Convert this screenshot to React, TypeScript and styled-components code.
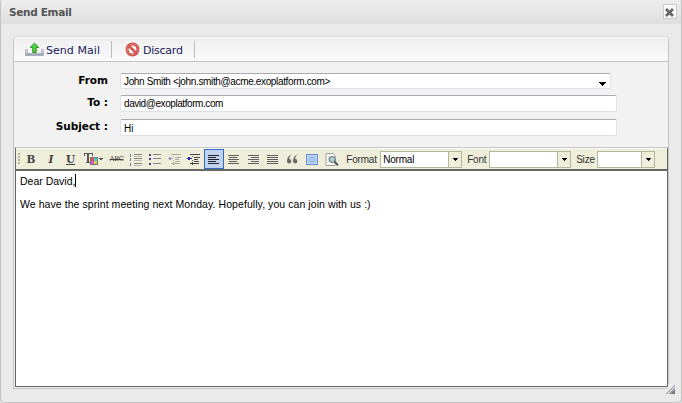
import React from 'react';
import styled, { createGlobalStyle } from 'styled-components';

const Global = createGlobalStyle`
  * { box-sizing: border-box; }
  body { margin: 0; background: #dcdcdc; font-family: "Liberation Sans", Arial, sans-serif; overflow: hidden; }
  svg { display: block; flex: none; }
`;

const Dialog = styled.div`
  width: 682px;
  height: 403px;
  display: flex;
  flex-direction: column;
  border: solid #c4c4c4;
  border-width: 0 1px 1px;
  border-radius: 3px 3px 5px 5px;
  background: #eaeaea;
`;
const TitleBar = styled.header`
  height: 24px;
  flex: none;
  display: flex;
  align-items: center;
  justify-content: space-between;
  padding: 0 4px 0 8px;
  background: linear-gradient(#eeeeee, #dfdfdf);
  border-radius: 3px 3px 0 0;
`;
const Label = styled.span<{ $size: number; $space?: number; $color?: string; $bold?: boolean; $verdana?: boolean }>`
  font-family: ${p => (p.$verdana ? '"DejaVu Sans", Verdana' : '"Liberation Sans", Arial')}, sans-serif;
  font-size: ${p => p.$size}px;
  letter-spacing: ${p => p.$space ?? 0}px;
  color: ${p => p.$color ?? '#000'};
  font-weight: ${p => (p.$bold ? 700 : 400)};
  white-space: pre;
  line-height: 14px;
`;
const CloseButton = styled.button`
  width: 14px;
  height: 15px;
  margin-bottom: 1px;
  padding: 1px 0 0;
  border: 1px solid #c9c9c9;
  background: #fafafa;
`;
const Panel = styled.main`
  height: 353px;
  margin: 12px 12px 0 12px;
  display: flex;
  flex-direction: column;
  border: 1px solid #c5c5c5;
  border-top-color: #d9d9d9;
  border-radius: 5px 5px 0 0;
  background: #f2f2f2;
`;
const Actions = styled.div`
  height: 25px;
  flex: none;
  display: flex;
  align-items: center;
  border-bottom: 1px solid #c5c5c5;
  border-top: 1px solid #fff;
  border-radius: 4px 4px 0 0;
  background: linear-gradient(#efefef, #fbfbfb);
`;
const Action = styled.button<{ $width: number; $gap: number; $left: number }>`
  width: ${p => p.$width}px;
  height: 17px;
  display: flex;
  align-items: center;
  gap: ${p => p.$gap}px;
  padding: 0 0 0 ${p => p.$left}px;
  border: 0;
  border-right: 1px solid #bcbcbc;
  background: none;
  & > span { padding-top: 2px; }
`;
const Form = styled.form`
  height: 86px;
  flex: none;
  display: grid;
  grid-template-columns: 95px 497px;
  grid-template-rows: 22px 24px 18px;
  column-gap: 11px;
  padding-top: 11px;
  border-bottom: 1px solid #c5c5c5;
`;
const FieldName = styled.label<{ $right?: number }>`
  line-height: 14px;
  display: flex;
  justify-content: flex-end;
  padding-right: ${p => p.$right ?? 0}px;
`;
const Field = styled.div<{ $width?: number; $height?: number; $top?: number }>`
  width: ${p => p.$width ?? 497}px;
  height: ${p => p.$height ?? 17}px;
  display: flex;
  align-items: center;
  justify-content: space-between;
  padding: ${p => p.$top ?? 2}px 4px 0 3px;
  background: #fff;
  border: 1px solid #dfe2e9;
  border-top-color: #ababab;
  border-radius: 2px;
  & > svg { margin-top: 3px; }
`;
const Editor = styled.section`
  flex: 1;
  display: flex;
  flex-direction: column;
  margin: 0 0 1px 1px;
  padding-top: 1px;
  border: 1px solid #666;
  border-top: 0;
  background: #fff;
`;
const EditorBar = styled.div`
  height: 22px;
  flex: none;
  display: flex;
  align-items: center;
  background: #eeeedb;
  border-bottom: 2px solid #696764;
`;
const Handle = styled.i`
  width: 2px;
  height: 12px;
  margin: 0 1px 0 2px;
  background: repeating-linear-gradient(#b5b39b 0 2px, transparent 2px 3px);
`;
const Tool = styled.button<{ $width?: number; $active?: boolean }>`
  width: ${p => p.$width ?? 19.6}px;
  height: ${p => (p.$active ? 20 : 18)}px;
  flex: none;
  display: flex;
  align-items: center;
  justify-content: center;
  padding: 0;
  border: ${p => (p.$active ? '1px solid #316ac5' : '0')};
  background: ${p => (p.$active ? '#c1d2ee' : 'transparent')};
`;
const Letter = styled.span<{ $kind: 'b' | 'i' | 'u' }>`
  font: 700 10.5px/13px "DejaVu Serif", "Liberation Serif", serif;
  color: #444;
  font-style: ${p => (p.$kind === 'i' ? 'italic' : 'normal')};
  text-decoration: ${p => (p.$kind === 'u' ? 'underline' : 'none')};
`;
const Struck = styled.span`
  font: 7px/9px "DejaVu Serif", serif;
  letter-spacing: -0.6px;
  color: #444;
  text-decoration: line-through;
`;
const Caption = styled.span<{ $width: number }>`
  width: ${p => p.$width}px;
  flex: none;
  display: flex;
  padding: 1px 0 0 5px;
`;
const Select = styled.div<{ $width: number }>`
  width: ${p => p.$width}px;
  height: 17px;
  flex: none;
  display: flex;
  justify-content: space-between;
  padding-left: 2px;
  border: 1px solid #b5b79c;
  background: #fff;
  & > span:first-child { padding-top: 1px; }
`;
const Arrow = styled.span`
  width: 13px;
  height: 15px;
  display: grid;
  place-items: center;
  border-left: 1px solid #b5b79c;
  background: #eeeedb;
`;
const Message = styled.div`
  flex: 1;
  padding: 3px 4px;
`;
const Line = styled.p`
  height: 14px;
  margin: 0 0 9px;
  display: flex;
`;
const Caret = styled.i`
  width: 1px;
  height: 13px;
  background: #000;
`;
const Grip = styled.svg`
  position: absolute;
  left: 665px;
  top: 384px;
`;

const Lines = ({ rows, color = '#606060' }: { rows: number[][]; color?: string }) => (
  <svg width="13" height="13" shapeRendering="crispEdges">
    {rows.map(([x, y, w], i) => <rect key={i} x={x} y={y} width={w} height="1" fill={color} />)}
  </svg>
);
const alignRows = (kind: 'left' | 'center' | 'right' | 'full') =>
  [11, 8, 11, 8, 11].map((w, i) => {
    const width = kind === 'full' ? 11 : w;
    const x = kind === 'right' ? 12 - width : kind === 'center' ? 1 + Math.floor((11 - width) / 2) : 1;
    return [x, 2 + i * 2, width];
  });
const ListIcon = ({ numbered }: { numbered?: boolean }) => (
  <svg width="13" height="13" shapeRendering="crispEdges">
    {[1, 5, 10].map(y => (
      <g key={y}>
        {numbered
          ? <path d={`M1 ${y}h1v3h-1z`} fill="#7470b9" />
          : <rect x="1" y={y} width="2" height="2" fill="#4541a0" />}
        <rect x="5" y={y} width="8" height="1" fill="#858585" />
        {numbered && <rect x="5" y={y + 2} width="8" height="1" fill="#bbb" />}
      </g>
    ))}
  </svg>
);
const IndentIcon = ({ faded }: { faded?: boolean }) => (
  <svg width="13" height="13" shapeRendering="crispEdges" opacity={faded ? 0.4 : 1}>
    <path d="M3 1h10v1H3zM7 4h6v1H7zM7 6h4v1H7zM7 8h5v1H7zM3 10h9v1H3z" fill="#444" />
    <path d="M0 5h5v1H0zM1 4h2v3H1z" fill="#332caa" />
    <path d="M5 1v1M5 3v1M5 7v1M5 9v1M5 11v1" stroke="#555" />
  </svg>
);
const Down = () => <svg width="5" height="3" shapeRendering="crispEdges"><path d="M0 0h5v1H0zM1 1h3v1H1zM2 2h1v1H2z" /></svg>;

export default function App() {
  return (
    <>
      <Global />
      <Dialog>
        <TitleBar>
          <Label $size={10.5} $bold $verdana $color="#555" $space={-0.32}>Send Email</Label>
          <CloseButton aria-label="Close">
            <svg width="11" height="11"><path d="M3 3l5 5m0-5l-5 5" stroke="#666" strokeWidth="2.8" strokeLinecap="square" /></svg>
          </CloseButton>
        </TitleBar>
        <Panel>
          <Actions>
            <Action $width={98} $gap={2} $left={11}>
              <svg width="19" height="15">
                <defs><linearGradient id="tray" x2="0" y2="1"><stop stopColor="#eef1f5" /><stop offset="1" stopColor="#8b95a5" /></linearGradient></defs>
                <path d="M.5 7.5h2v4h14v-4h2v6H.5z" fill="url(#tray)" stroke="#a0a8b7" strokeWidth=".7" />
                <path d="M9.5 1.2L5.2 5.4h2.6v5.1h3.4V5.4h2.6z" fill="#51d73d" stroke="#278e25" />
              </svg>
              <Label $size={11} $verdana $color="#20205c" $space={0.05}>Send Mail</Label>
            </Action>
            <Action $width={83} $gap={3} $left={13}>
              <svg width="15" height="15"><circle cx="7.5" cy="7.5" r="5.4" fill="#fff" stroke="#c84744" strokeWidth="3" /><circle cx="7.5" cy="7.5" r="5.5" fill="none" stroke="#ee8c82" strokeWidth="1" /><path d="M3.5 3.5l8 8" stroke="#d95752" strokeWidth="2.6" /></svg>
              <Label $size={11} $verdana $color="#20205c" $space={-0.25}>Discard</Label>
            </Action>
          </Actions>
          <Form>
            <FieldName $right={1}><Label $size={10.5} $bold $verdana>From</Label></FieldName>
            <Field $width={491} $height={16}>
              <Label $size={10} $space={-0.35}>John Smith &lt;john.smith@acme.exoplatform.com&gt;</Label>
              <svg width="7" height="4" shapeRendering="crispEdges"><path d="M0 0h7v1H0zM1 1h5v1H1zM2 2h3v1H2zM3 3h1v1H3z" /></svg>
            </Field>
            <FieldName $right={1}><Label $size={10.5} $bold $verdana>To :</Label></FieldName>
            <Field $top={0}><Label $size={10} $space={-0.43}>david@exoplatform.com</Label></Field>
            <FieldName $right={1}><Label $size={10.5} $bold $verdana>Subject :</Label></FieldName>
            <Field><Label $size={10}>Hi</Label></Field>
          </Form>
          <Editor>
            <EditorBar>
              <Handle />
              <Tool $width={20}><Letter $kind="b">B</Letter></Tool>
              <Tool $width={20}><Letter $kind="i">I</Letter></Tool>
              <Tool $width={19}><Letter $kind="u">U</Letter></Tool>
              <Tool $width={27}>
                <svg width="19" height="14" shapeRendering="crispEdges">
                  <path d="M0 1h9v3H8V2H5v8h2v1H2v-1h1V2H1v2H0z" fill="#555" />
                  <path d="M6 5h8v8H6z" fill="#777" />
                  <path d="M7 6h3v3H7z" fill="#f04b4b" />
                  <path d="M10 6h3v3h-3z" fill="#3cd5d2" />
                  <path d="M7 9h3v3H7z" fill="#e052e0" />
                  <path d="M10 9h3v3h-3z" fill="#d5ce3a" />
                  <path d="M15 6h4v1h-1v1h-2V7h-1z" fill="#555" />
                </svg>
              </Tool>
              <Tool $width={19}><Struck>ABC</Struck></Tool>
              <Tool $width={19}><ListIcon numbered /></Tool>
              <Tool><ListIcon /></Tool>
              <Tool><IndentIcon faded /></Tool>
              <Tool><IndentIcon /></Tool>
              <Tool $active $width={20}><Lines rows={alignRows('left')} color="#222" /></Tool>
              <Tool><Lines rows={alignRows('center')} /></Tool>
              <Tool><Lines rows={alignRows('right')} /></Tool>
              <Tool><Lines rows={alignRows('full')} /></Tool>
              <Tool>
                <svg width="11" height="10"><path d="M5 0Q0 2 0 7a2.2 2.2 0 1 0 2-2Q2 2 5 0zm6 0Q6 2 6 7a2.2 2.2 0 1 0 2-2Q8 2 11 0z" fill="#696969" /></svg>
              </Tool>
              <Tool>
                <svg width="12" height="11"><rect x=".5" y=".5" width="11" height="10" fill="#eef6ff" stroke="#5b87ce" /><rect x="2" y="2" width="8" height="7" fill="#a6c7ef" stroke="#83abe1" strokeWidth=".6" /></svg>
              </Tool>
              <Tool>
                <svg width="14" height="13"><path d="M1 .5h7l2 2v10H1z" fill="#fff" stroke="#888" strokeWidth=".8" /><path d="M3 4h3M3 6h2M3 8h2" stroke="#bbb" /><circle cx="7.3" cy="6.5" r="3" fill="#a5d4dc" stroke="#606060" /><path d="M9.5 8.8l3.5 3.5" stroke="#555" strokeWidth="2" /></svg>
              </Tool>
              <Caption $width={38.8}><Label $size={10} $color="#333" $space={-0.2}>Format</Label></Caption>
              <Select $width={82}><Label $size={10} $space={-0.2}>Normal</Label><Arrow><Down /></Arrow></Select>
              <Caption $width={27}><Label $size={10} $color="#333" $space={-0.2}>Font</Label></Caption>
              <Select $width={82}><span /><Arrow><Down /></Arrow></Select>
              <Caption $width={26}><Label $size={10} $color="#333" $space={-0.2}>Size</Label></Caption>
              <Select $width={58}><span /><Arrow><Down /></Arrow></Select>
            </EditorBar>
            <Message>
              <Line><Label $size={10.5}>Dear David,</Label><Caret /></Line>
              <Line><Label $size={10.5} $space={0.07}>We have the sprint meeting next Monday. Hopefully, you can join with us :)</Label></Line>
            </Message>
          </Editor>
        </Panel>
      </Dialog>
      <Grip width="10" height="10">
        <path d="M0 10V6H3V0h7v10z" fill="#eee" />
        <path d="M0 10L10 0v10z" fill="#d2d4da" />
        <path d="M1 10L10 1M4 10l6-6" stroke="#9b9da6" />
        <path d="M5 10l5-5v5z" fill="#777a85" />
      </Grip>
    </>
  );
}
